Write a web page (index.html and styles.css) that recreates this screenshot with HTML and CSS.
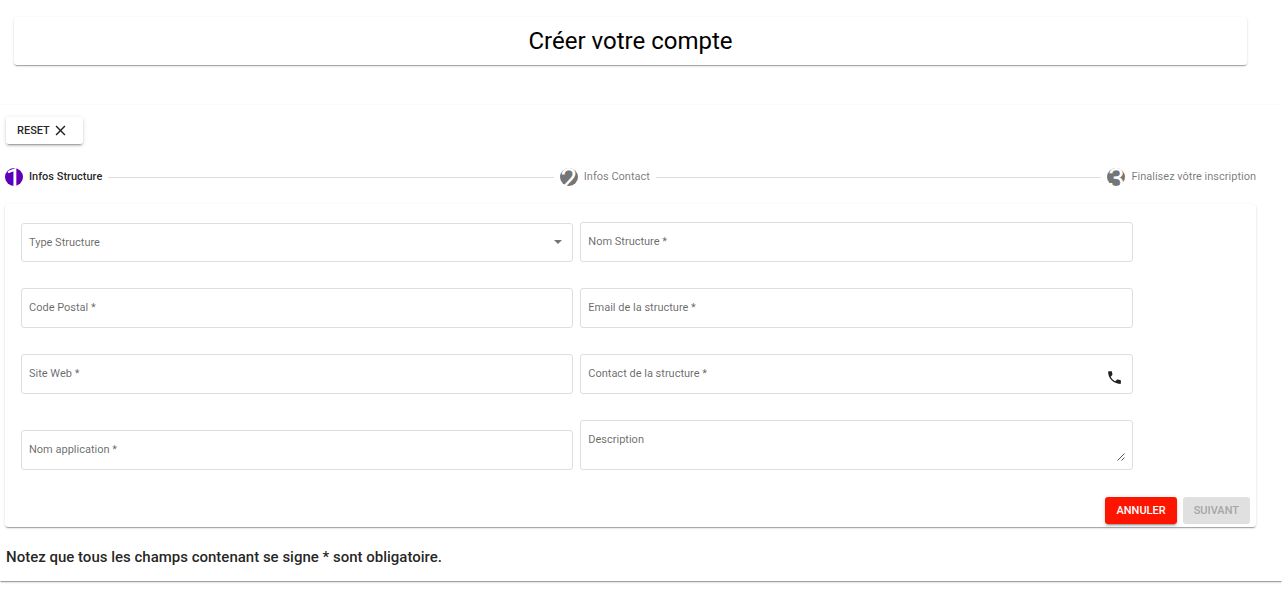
FILE: index.html
```html
<!DOCTYPE html>
<html lang="fr">
<head>
<meta charset="utf-8">
<meta name="viewport" content="width=device-width, initial-scale=1">
<title>Créer votre compte</title>
<link rel="stylesheet" href="styles.css">
</head>
<body>
<header class="card title-card">
  <h1 class="title">Créer votre compte</h1>
</header>
<main class="card page-card">
  <button type="button" class="btn btn-reset">RESET
    <svg class="close-icon" viewBox="0 0 24 24" aria-hidden="true"><path d="M19 6.41 17.59 5 12 10.59 6.41 5 5 6.41 10.59 12 5 17.59 6.41 19 12 13.41 17.59 19 19 17.59 13.41 12z"/></svg>
  </button>
  <ol class="stepper">
    <li class="step step-active"><span class="badge">1</span>Infos Structure</li>
    <li class="step"><span class="badge">2</span>Infos Contact</li>
    <li class="step"><span class="badge">3</span>Finalisez vôtre inscription</li>
  </ol>
  <form class="card form-card">
    <div class="fields">
      <div class="field">
        <select id="type" class="control control-select"><option></option></select>
        <label for="type" class="label">Type Structure</label>
        <svg class="arrow" viewBox="0 0 8 4" aria-hidden="true"><path d="M0 0h8L4 4z"/></svg>
      </div>
      <div class="field">
        <input id="nom" type="text" class="control">
        <label for="nom" class="label">Nom Structure *</label>
      </div>
      <div class="field">
        <input id="postal" type="text" class="control">
        <label for="postal" class="label">Code Postal *</label>
      </div>
      <div class="field">
        <input id="email" type="email" class="control">
        <label for="email" class="label">Email de la structure *</label>
      </div>
      <div class="field">
        <input id="site" type="url" class="control">
        <label for="site" class="label">Site Web *</label>
      </div>
      <div class="field">
        <input id="contact" type="tel" class="control">
        <label for="contact" class="label">Contact de la structure *</label>
        <svg class="phone" viewBox="0 0 24 24" aria-hidden="true"><path d="M6.62 10.79c1.44 2.83 3.76 5.14 6.59 6.59l2.2-2.2c.27-.27.67-.36 1.02-.24 1.12.37 2.33.57 3.57.57.55 0 1 .45 1 1V20c0 .55-.45 1-1 1-9.39 0-17-7.61-17-17 0-.55.45-1 1-1h3.5c.55 0 1 .45 1 1 0 1.25.2 2.45.57 3.57.11.35.03.74-.25 1.02l-2.2 2.2z"/></svg>
      </div>
      <div class="field">
        <input id="app" type="text" class="control">
        <label for="app" class="label">Nom application *</label>
      </div>
      <div class="field">
        <textarea id="description" class="control control-area"></textarea>
        <label for="description" class="label">Description</label>
        <svg class="grip" viewBox="0 0 8 8" aria-hidden="true"><path d="M.5 7.5l7-7M4.5 7.5l3-3"/></svg>
      </div>
    </div>
    <div class="actions">
      <button type="button" class="btn btn-cancel">ANNULER</button>
      <button type="submit" class="btn btn-next" disabled>SUIVANT</button>
    </div>
  </form>
  <p class="note">Notez que tous les champs contenant se signe * sont obligatoire.</p>
</main>
</body>
</html>
```
FILE: styles.css
```css
* { box-sizing: border-box; }

body {
  min-height: 100vh;
  margin: 0;
  padding: 17px 0;
  overflow-x: hidden;
  background: #fff;
  color: rgba(0, 0, 0, 0.87);
  font: 11px/16px Roboto, sans-serif;
}

.card {
  border-radius: 3px;
  background: #fff;
  box-shadow: 0 2px 1px -1px rgba(0, 0, 0, 0.2), 0 1px 1px 0 rgba(0, 0, 0, 0.14), 0 1px 3px 0 rgba(0, 0, 0, 0.12);
}

.title-card {
  margin: 0 35px 40px 14px;
  padding: 8px;
}

.title {
  margin: 0;
  color: #000;
  font-size: 24px;
  font-weight: 400;
  line-height: 32px;
  text-align: center;
}

.page-card {
  padding: 12px 26px 14px 5px;
  border-radius: 0;
}

.btn {
  height: 27px;
  padding: 0 11px;
  border: 0;
  border-radius: 3px;
  font: 500 11px/27px Roboto, sans-serif;
  box-shadow: 0 3px 1px -2px rgba(0, 0, 0, 0.2), 0 2px 2px 0 rgba(0, 0, 0, 0.14), 0 1px 5px 0 rgba(0, 0, 0, 0.12);
}

.btn-reset {
  display: flex;
  align-items: center;
  gap: 2px;
  margin-left: 1px;
  padding-right: 14px;
  background: #fff;
  color: rgba(0, 0, 0, 0.87);
}

.close-icon {
  width: 17px;
  height: 17px;
  fill: currentColor;
}

.stepper {
  display: flex;
  margin: 24px 0 18px;
  padding: 0;
  list-style: none;
}

.step {
  display: flex;
  flex: 1 1 auto;
  align-items: center;
  color: rgba(0, 0, 0, 0.54);
  white-space: nowrap;
}

.step:not(:last-child)::after {
  content: "";
  flex: 1;
  height: 1px;
  margin: 0 6px;
  background: #dedede;
}

.step:last-child { flex: none; }

.step-active {
  color: rgba(0, 0, 0, 0.87);
  font-weight: 500;
}

.badge {
  display: flex;
  justify-content: center;
  width: 18px;
  height: 18px;
  margin-right: 6px;
  border-radius: 50%;
  background: #757575;
  color: #fff;
  font-size: 30px;
  font-weight: 400;
  line-height: 22px;
}

.step-active .badge { background: #5b00b8; }

.form-card { padding: 18px 6px 3px 16px; }

.fields {
  display: grid;
  grid-template-columns: 11fr 11fr 2fr;
  gap: 26px 7px;
  align-items: end;
  margin-right: 10px;
}

.field { position: relative; }

.field:nth-child(odd) { grid-column: 1; }
.field:nth-child(even) { grid-column: 2; }

.control {
  display: block;
  width: 100%;
  height: 40px;
  padding: 0 7px;
  border: 1px solid #dedede;
  border-radius: 3px;
  background: transparent;
  color: inherit;
  font: inherit;
}

.control-select {
  height: 39px;
  appearance: none;
}

.control-area {
  height: 50px;
  padding-top: 12px;
  resize: none;
}

.label {
  position: absolute;
  top: 12px;
  left: 8px;
  color: rgba(0, 0, 0, 0.6);
  pointer-events: none;
}

.arrow {
  position: absolute;
  top: 17px;
  right: 11px;
  width: 8px;
  height: 4px;
  fill: #757575;
}

.phone {
  position: absolute;
  top: 15px;
  right: 10px;
  width: 17px;
  height: 17px;
  fill: #212121;
}

.grip {
  position: absolute;
  right: 8px;
  bottom: 9px;
  width: 8px;
  height: 8px;
  fill: none;
  stroke: #555;
}

.actions {
  display: flex;
  justify-content: flex-end;
  gap: 6px;
  margin-top: 27px;
}

.btn-cancel {
  background: #fd1500;
  color: #fff;
}

.btn-next {
  background: #e0e0e0;
  color: #a6a6a6;
  box-shadow: none;
}

.note {
  margin: 20px 1px 0;
  font-size: 15px;
  font-weight: 500;
  line-height: 20px;
}
```
